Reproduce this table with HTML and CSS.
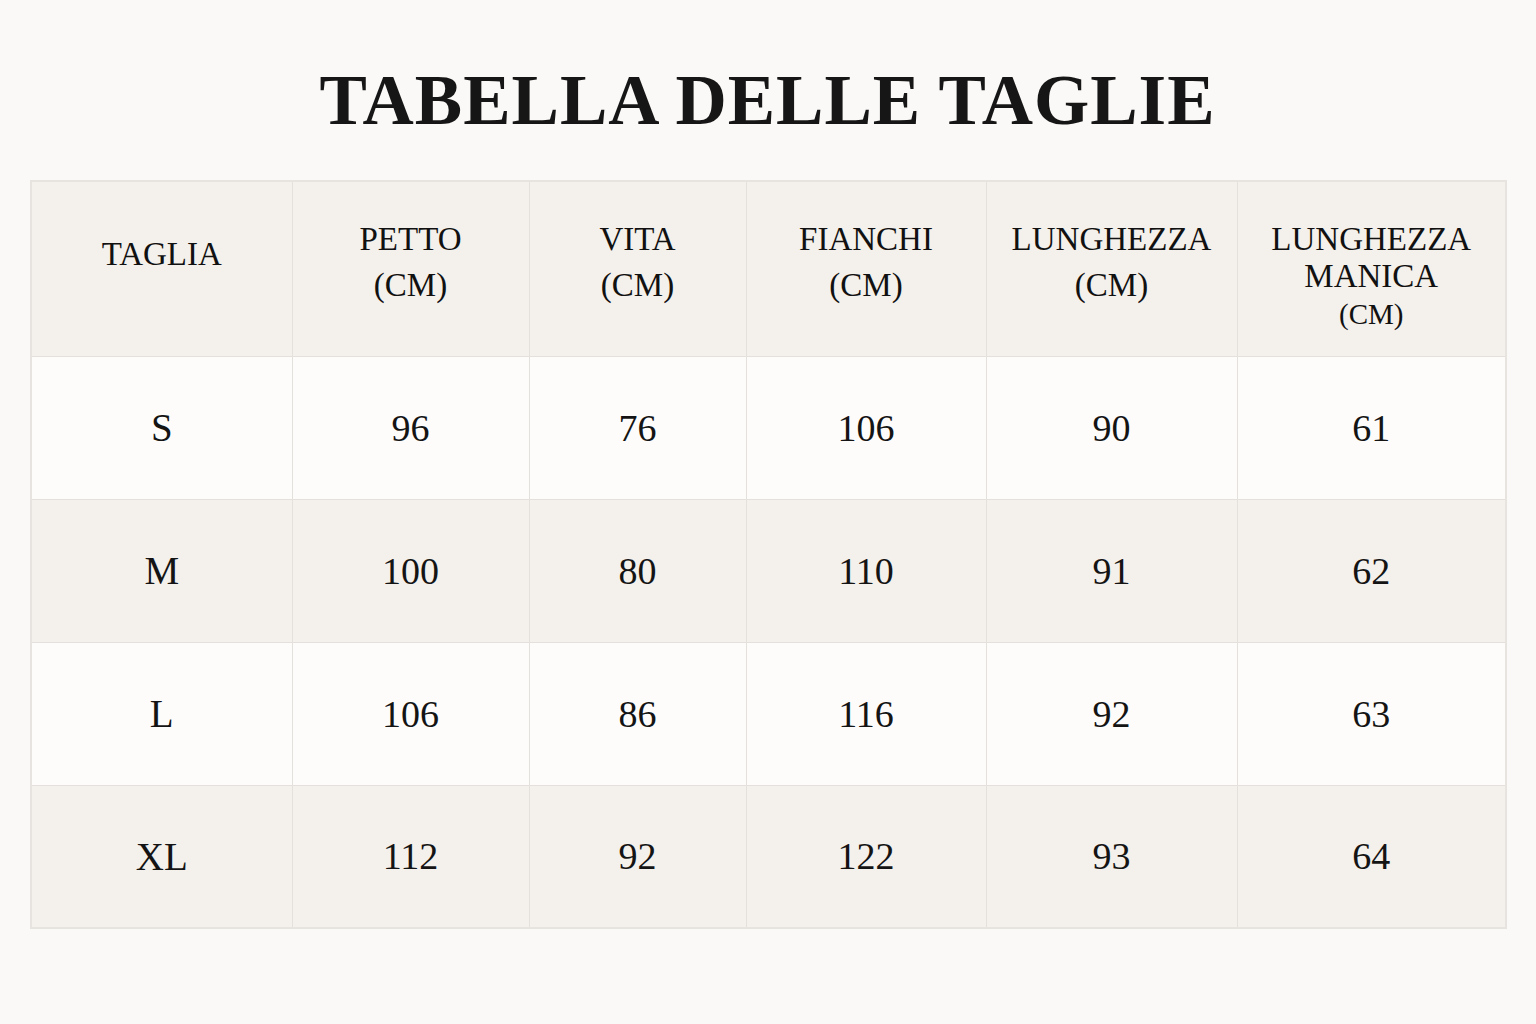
FILE: index.html
```html
<!DOCTYPE html>
<html lang="it">
<head>
<meta charset="utf-8">
<title>Tabella delle taglie</title>
<link rel="stylesheet" href="styles.css">
</head>
<body>
<main class="page">
  <h1 class="title">TABELLA DELLE TAGLIE</h1>
  <table class="sizes">
    <colgroup>
      <col class="c1"><col class="c2"><col class="c3"><col class="c4"><col class="c5"><col class="c6">
    </colgroup>
    <thead>
      <tr>
        <th class="h-single">TAGLIA</th>
        <th>PETTO<br>(CM)</th>
        <th>VITA<br>(CM)</th>
        <th>FIANCHI<br>(CM)</th>
        <th>LUNGHEZZA<br>(CM)</th>
        <th class="h-triple">LUNGHEZZA<br>MANICA<br><span class="unit">(CM)</span></th>
      </tr>
    </thead>
    <tbody>
      <tr class="light"><td class="size">S</td><td>96</td><td>76</td><td>106</td><td>90</td><td>61</td></tr>
      <tr class="tint"><td class="size">M</td><td>100</td><td>80</td><td>110</td><td>91</td><td>62</td></tr>
      <tr class="light"><td class="size">L</td><td>106</td><td>86</td><td>116</td><td>92</td><td>63</td></tr>
      <tr class="tint"><td class="size">XL</td><td>112</td><td>92</td><td>122</td><td>93</td><td>64</td></tr>
    </tbody>
  </table>
</main>
</body>
</html>
```

FILE: styles.css
```css
html, body {
  margin: 0;
  padding: 0;
  background: #faf9f7;
}

body {
  font-family: "Liberation Serif", "Times New Roman", serif;
  color: #141414;
  width: 1536px;
  height: 1024px;
  overflow: hidden;
}

.page {
  padding: 0 31px 0 30px;
}

.title {
  margin: 0;
  height: 180px;
  display: flex;
  align-items: center;
  justify-content: center;
  font-size: 71px;
  font-weight: 700;
  letter-spacing: 1px;
  padding-top: 20px;
  box-sizing: border-box;
  color: #161616;
}

.sizes {
  width: 1475px;
  border-collapse: collapse;
  table-layout: fixed;
  border: 2px solid #e7e3de;
}

.c1 { width: 261px; }
.c2 { width: 237px; }
.c3 { width: 217px; }
.c4 { width: 240px; }
.c5 { width: 251px; }
.c6 { width: 269px; }

.sizes th,
.sizes td {
  border: 1.5px solid #e4e0db;
  text-align: center;
  vertical-align: middle;
  padding: 0;
}

.sizes thead tr {
  height: 175px;
  background: #f4f0eb;
}

.sizes th {
  font-weight: 400;
  font-size: 33px;
  line-height: 46px;
  padding-bottom: 14px;
  color: #111;
}

.sizes th.h-single {
  padding-bottom: 30px;
}

.sizes th.h-triple {
  line-height: 37px;
  padding-bottom: 0;
  padding-top: 16px;
}

.sizes th.h-wide {
  letter-spacing: -0.5px;
}

.unit {
  font-size: 29px;
}

.sizes tbody tr {
  height: 143px;
}

.sizes tbody tr.light {
  background: #fdfcfb;
}

.sizes tbody tr.tint {
  background: #f4f0eb;
}

.sizes td {
  font-size: 38px;
  color: #141414;
}

.sizes td.size {
  font-size: 39px;
}
```
